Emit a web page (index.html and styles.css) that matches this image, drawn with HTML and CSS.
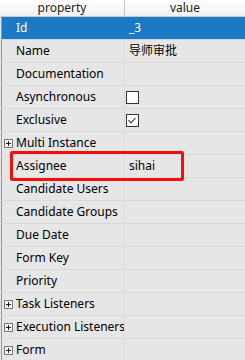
FILE: index.html
```html
<!DOCTYPE html>
<html>
    <head>
        <title>Properties</title>
        <link rel="stylesheet" href="styles.css">
    </head>
    <body>
        <div class="sheet">
            <div class="head">
                <div class="hcell key">property</div>
                <div class="hcell">value</div>
            </div>
            <div class="row selected"><div class="key">Id</div><div class="val">_3</div></div>
            <div class="row"><div class="key">Name</div><div class="val">导师审批</div></div>
            <div class="row"><div class="key">Documentation</div><div class="val"></div></div>
            <div class="row"><div class="key">Asynchronous</div><div class="val"><span class="check"></span></div></div>
            <div class="row"><div class="key">Exclusive</div><div class="val"><span class="check on"></span></div></div>
            <div class="row"><div class="key"><span class="plus"></span>Multi Instance</div><div class="val"></div></div>
            <div class="row"><div class="key">Assignee</div><div class="val">sihai</div></div>
            <div class="row"><div class="key">Candidate Users</div><div class="val"></div></div>
            <div class="row"><div class="key">Candidate Groups</div><div class="val"></div></div>
            <div class="row"><div class="key">Due Date</div><div class="val"></div></div>
            <div class="row"><div class="key">Form Key</div><div class="val"></div></div>
            <div class="row"><div class="key">Priority</div><div class="val"></div></div>
            <div class="row"><div class="key"><span class="plus"></span>Task Listeners</div><div class="val"></div></div>
            <div class="row"><div class="key"><span class="plus"></span>Execution Listeners</div><div class="val"></div></div>
            <div class="row"><div class="key"><span class="plus"></span>Form</div><div class="val"></div></div>
            <div class="mark"></div>
        </div>
    </body>
</html>
```

FILE: styles.css
```css
html, body {
    margin: 0px;
    height: 100%;
    overflow: hidden;
}
body {
    background: #e6e6e6;
    font-family: "Noto Sans", "Noto Sans CJK SC", sans-serif;
    font-size: 12px;
    color: #000;
}
.sheet {
    position: relative;
}
.head {
    display: flex;
    height: 16px;
    border-bottom: 1px solid #c9c9c9;
    background: linear-gradient(#ffffff, #f1f1f1);
    color: #222;
    line-height: 15px;
}
.hcell {
    flex: 1;
    text-align: center;
}
.hcell.key {
    flex: none;
    width: 124px;
    padding-left: 0px;
    border-right: 1px solid #c4c4c4;
}
.row {
    display: flex;
    height: 22px;
    line-height: 22px;
    border-bottom: 1px solid #dadada;
    border-left: 1px solid #9a9a9a;
    margin-left: 1px;
}
.key {
    padding-left: 14px;
    position: relative;
    white-space: nowrap;
    overflow: hidden;
    border-right: 1px solid #dadada;
}
.row .key {
    width: 108px;
    flex: none;
}
.val {
    flex: 1;
    padding-left: 4px;
    display: flex;
    align-items: center;
}
.selected {
    background: #1a7ac5;
    color: #fff;
}
.selected .key {
    border-right-color: #1a7ac5;
}
.check {
    width: 11px;
    height: 11px;
    margin-left: -3px;
    border: 1px solid #333;
    background: #fff;
    position: relative;
}
.check.on::after {
    content: "";
    position: absolute;
    left: 3px;
    top: 1px;
    width: 3px;
    height: 6px;
    border: solid #333;
    border-width: 0 1.5px 1.5px 0;
    transform: rotate(45deg);
}
.plus {
    position: absolute;
    left: 2px;
    top: 7px;
    width: 7px;
    height: 7px;
    border: 1px solid #777;
    background: #fafafa;
}
.plus::before, .plus::after {
    content: "";
    position: absolute;
    background: #222;
}
.plus::before {
    left: 1px;
    top: 3px;
    width: 5px;
    height: 1px;
}
.plus::after {
    left: 3px;
    top: 1px;
    width: 1px;
    height: 5px;
}
.mark {
    position: absolute;
    left: 10px;
    top: 151px;
    width: 168px;
    height: 24px;
    border: 3px solid #f50d0d;
    border-radius: 2px;
}
```
